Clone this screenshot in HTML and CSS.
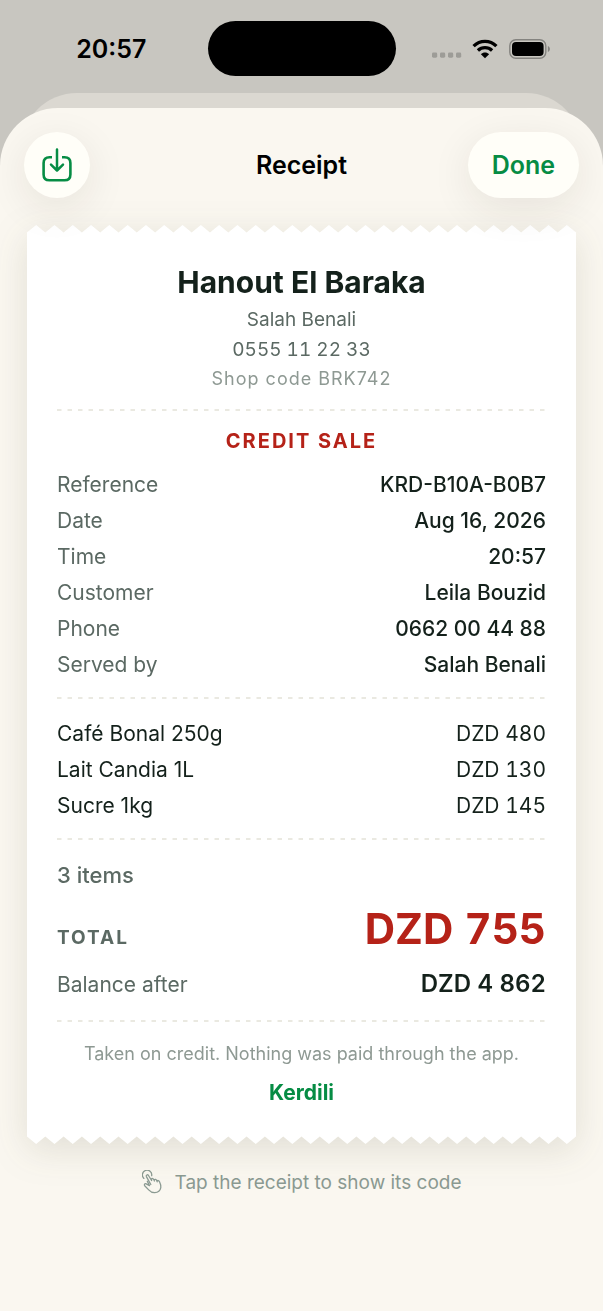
FILE: index.html
```
<!DOCTYPE html>
<html lang="en">
<head>
<meta charset="utf-8">
<meta name="viewport" content="width=device-width, initial-scale=1">
<title>Receipt</title>
<link rel="stylesheet" href="styles.css">
</head>
<body>
<div class="screen">
  <header class="status">
    <time class="clock">20:57</time>
    <div class="island"></div>
    <div class="indicators">
      <svg class="dots" viewBox="0 0 30 6" aria-hidden="true"><g fill="#9d9c97"><rect x="0" y="0.5" width="5.2" height="5.2" rx="1.4"/><rect x="8" y="0.5" width="5.2" height="5.2" rx="1.4"/><rect x="16" y="0.5" width="5.2" height="5.2" rx="1.4"/><rect x="24" y="0.5" width="5.2" height="5.2" rx="1.4"/></g></svg>
      <svg class="wifi" viewBox="0 0 26 20" aria-label="Wi-Fi" role="img"><g fill="none" stroke="#000" stroke-width="3.3"><path d="M1.6 7.2C8 .8 18 .8 24.4 7.2"/><path d="M5.9 11.5C10 7.7 16 7.7 20.1 11.5"/></g><path d="M13 19.3 8.9 15.2C11.2 13 14.8 13 17.1 15.2Z"/></svg>
      <svg class="battery" viewBox="0 0 42 20" aria-label="Battery" role="img"><rect x="0.8" y="0.8" width="36" height="18.4" rx="6" fill="none" stroke="#84837f" stroke-width="1.4"/><rect x="3" y="3" width="31.6" height="14" rx="4" fill="#000"/><path d="M38.9 7v6c1.2-.5 2-1.6 2-3s-.8-2.500-2-3Z" fill="#84837f"/></svg>
    </div>
  </header>
  <div class="stack">
    <div class="behind"></div>
    <main class="sheet">
      <div class="toolbar">
        <button class="round" type="button" aria-label="Save receipt">
          <svg class="save" viewBox="0 0 32 36" fill="none" stroke="#068c44" stroke-linecap="round" stroke-linejoin="round"><path stroke-width="2.600" d="M11 10.300H8.500C4.600 10.300 2.600 12.300 2.600 16v11.500C2.600 31.400 4.600 33.300 8.500 33.300h15c3.900 0 5.900-1.900 5.900-5.800V16c0-3.700-2-5.700-5.900-5.700H21" stroke-linecap="butt"/><path stroke-width="2.500" d="M16 2.500v20.700M10 17.700l6 5.800 6-5.800"/></svg>
        </button>
        <h1 class="title">Receipt</h1>
        <button class="done" type="button">Done</button>
      </div>
      <article class="receipt">
        <svg class="edge" viewBox="0 0 60 8" preserveAspectRatio="none" aria-hidden="true"><path fill="#fff" d="M0 8V7.500L1 0l1 7.500L3 0l1 7.500L5 0l1 7.500L7 0l1 7.500L9 0l1 7.500L11 0l1 7.500L13 0l1 7.500L15 0l1 7.500L17 0l1 7.500L19 0l1 7.500L21 0l1 7.500L23 0l1 7.500L25 0l1 7.500L27 0l1 7.500L29 0l1 7.500L31 0l1 7.500L33 0l1 7.500L35 0l1 7.500L37 0l1 7.500L39 0l1 7.500L41 0l1 7.500L43 0l1 7.500L45 0l1 7.500L47 0l1 7.500L49 0l1 7.500L51 0l1 7.500L53 0l1 7.500L55 0l1 7.500L57 0l1 7.500L59 0l1 7.500V8Z"/></svg>
        <div class="paper">
          <section class="shop">
            <h2 class="name">Hanout El Baraka</h2>
            <p class="owner">Salah Benali</p>
            <p class="tel">0555 11 22 33</p>
            <p class="code">Shop code BRK742</p>
          </section>
          <svg class="rule" aria-hidden="true"><line x1="0" y1="1" x2="100%" y2="1"/></svg>
          <section class="sale">
            <h3 class="kind">CREDIT SALE</h3>
            <dl class="rows">
              <div class="row"><dt>Reference</dt><dd>KRD-B10A-B0B7</dd></div>
              <div class="row"><dt>Date</dt><dd>Aug 16, 2026</dd></div>
              <div class="row"><dt>Time</dt><dd>20:57</dd></div>
              <div class="row"><dt>Customer</dt><dd>Leila Bouzid</dd></div>
              <div class="row"><dt>Phone</dt><dd>0662 00 44 88</dd></div>
              <div class="row"><dt>Served by</dt><dd>Salah Benali</dd></div>
            </dl>
          </section>
          <svg class="rule" aria-hidden="true"><line x1="0" y1="1" x2="100%" y2="1"/></svg>
          <table class="items">
            <tbody>
              <tr><th scope="row">Café Bonal 250g</th><td>DZD 480</td></tr>
              <tr><th scope="row">Lait Candia 1L</th><td>DZD 130</td></tr>
              <tr><th scope="row">Sucre 1kg</th><td>DZD 145</td></tr>
            </tbody>
          </table>
          <svg class="rule" aria-hidden="true"><line x1="0" y1="1" x2="100%" y2="1"/></svg>
          <section class="sums">
            <p class="count">3 items</p>
            <div class="total"><span class="total-label">TOTAL</span><strong class="amount">DZD 755</strong></div>
            <div class="balance"><span>Balance after</span><strong class="after">DZD 4 862</strong></div>
          </section>
          <svg class="rule" aria-hidden="true"><line x1="0" y1="1" x2="100%" y2="1"/></svg>
          <footer class="foot">
            <p class="note">Taken on credit. Nothing was paid through the app.</p>
            <p class="brand">Kerdili</p>
          </footer>
        </div>
        <svg class="edge" viewBox="0 0 60 8" preserveAspectRatio="none" aria-hidden="true"><path fill="#fff" d="M0 0V.5L1 8l1-7.500L3 8l1-7.500L5 8l1-7.500L7 8l1-7.500L9 8l1-7.500L11 8l1-7.500L13 8l1-7.500L15 8l1-7.500L17 8l1-7.500L19 8l1-7.500L21 8l1-7.500L23 8l1-7.500L25 8l1-7.500L27 8l1-7.500L29 8l1-7.500L31 8l1-7.500L33 8l1-7.500L35 8l1-7.500L37 8l1-7.500L39 8l1-7.500L41 8l1-7.500L43 8l1-7.500L45 8l1-7.500L47 8l1-7.500L49 8l1-7.500L51 8l1-7.500L53 8l1-7.500L55 8l1-7.500L57 8l1-7.500L59 8l1-7.500V0Z"/></svg>
      </article>
      <p class="hint">
        <svg class="tap" viewBox="0 0 20 24" fill="none" stroke="#8b9a92" stroke-width="1.300" stroke-linecap="round" stroke-linejoin="round" aria-hidden="true"><path d="M1.900 8.400A4.700 4.700 0 1 1 9.700 5.600"/><path d="M8.800 14.500 4.400 6.600c-.7-1.500 1.200-2.500 2.100-1.100l3.100 5M9.600 10.500l-.4-1.200c.9-1.300 2-.9 2.800.6l.4 1.100M12 9.900c.9-1 2.100-.7 2.700.6l.5 1.300M14.900 10.900c1-.8 2-.4 2.600.8 1.100 2.200 1.700 4 1.300 6-.6 3-3 4.900-6 5-2.600.1-4.600-1.100-6.100-2.800l-4-4.200c-.9-1.100.1-2.500 1.500-1.800l3.300 1.700-2.200-4.300"/></svg>
        <span>Tap the receipt to show its code</span>
      </p>
    </main>
  </div>
</div>
</body>
</html>
```
FILE: styles.css
```
* { box-sizing: border-box; }
body, h1, h2, h3, p, dl, dd { margin: 0; }
body {
  background: #c8c6c0;
  color: #14211b;
  font-family: Inter, "Liberation Sans", sans-serif;
  font-size: 21px;
  line-height: 24px;
}
.screen { display: flex; flex-direction: column; min-height: 100vh; }
.status {
  display: grid;
  grid-template-columns: 1fr 188px 1fr;
  align-items: center;
  padding: 21px 0 17px;
  color: #000;
}
.clock { padding: 1px 0 0 15px; text-align: center; font-size: 25px; font-weight: 600; }
.island { height: 55px; border-radius: 28px; background: #000; }
.indicators { display: flex; justify-content: center; align-items: center; padding-right: 16px; }
.indicators svg { display: block; }
.dots { width: 30px; height: 6px; margin: 13px 10px 0 0; }
.wifi { width: 26px; height: 20px; margin-right: 11px; }
.battery { width: 42px; height: 20px; }
.stack { display: flex; flex: 1; flex-direction: column; }
.behind { height: 75px; margin: 0 21px -60px; border-radius: 56px 56px 0 0; background: #dbd8d1; }
.sheet { flex: 1; padding: 24px 24px 30px; border-radius: 58px 58px 0 0; background: #faf7f0; position: relative; overflow: hidden; }
.toolbar {
  display: grid;
  grid-template-columns: 1fr auto 1fr;
  align-items: center;
  position: relative;
  z-index: 1;
}
.round, .done {
  height: 66px;
  border: 0;
  border-radius: 33px;
  background: #fffef8;
  box-shadow: 0 10px 42px rgba(40, 35, 20, 0.09);
  color: #068c44;
  font: 600 25px/30px Inter, "Liberation Sans", sans-serif;
}
.round { display: grid; place-items: center; width: 66px; padding: 0; }
.save { width: 32px; height: 36px; }
.title { color: #000; font-size: 25px; font-weight: 600; line-height: 30px; }
.done { justify-self: end; padding: 0 24px; }
.receipt { margin: 27px 3px 0; filter: drop-shadow(0 9px 18px rgba(60, 60, 30, 0.13)); }
.edge { display: block; width: 100%; height: 8px; }
.paper { padding: 31px 30px 29px; background: #fff; }
.shop { padding-bottom: 2px; text-align: center; color: #5b6963; }
.name { color: #14211b; font-size: 30px; font-weight: 700; line-height: 36px; }
.owner { margin-top: 5px; font-size: 19px; line-height: 30px; }
.tel { font-size: 19px; line-height: 30px; font-variant-numeric: tabular-nums; }
.code { color: #8e9993; font-size: 18px; line-height: 28px; letter-spacing: 1px; }
.rule { display: block; width: 100%; height: 2px; margin: 14px 0 17px; }
.rule line { stroke: #e3e2d8; stroke-width: 1.5; stroke-dasharray: 4.5 6; }
.kind { color: #b52218; font-size: 20px; font-weight: 700; line-height: 26px; letter-spacing: 2px; text-align: center; }
.rows { margin-top: 13px; }
.row { display: flex; justify-content: space-between; line-height: 36px; }
.row dt { color: #5b6963; }
.row dd { font-weight: 500; }
.items { width: 100%; border-collapse: collapse; line-height: 36px; }
.items th, .items td { padding: 0; font-weight: 400; text-align: left; }
.items td { text-align: right; font-variant-numeric: tabular-nums; }
.sums { padding-bottom: 3px; color: #5b6963; }
.count { font-size: 22px; font-weight: 500; line-height: 36px; }
.total { display: flex; justify-content: space-between; align-items: baseline; margin-top: 10px; }
.total-label { font-size: 19px; font-weight: 700; letter-spacing: 2px; }
.amount { color: #b52218; font-size: 42px; font-weight: 700; line-height: 52px; font-variant-numeric: tabular-nums; }
.balance { display: flex; justify-content: space-between; align-items: baseline; margin-top: 11px; line-height: 36px; }
.after { color: #14211b; font-size: 24px; font-weight: 600; font-variant-numeric: tabular-nums; }
.foot { text-align: center; }
.note { color: #8e9993; font-size: 18px; line-height: 30px; }
.brand { margin-top: 10px; color: #068c44; font-weight: 700; line-height: 28px; }
.hint { display: flex; justify-content: center; gap: 13px; margin-top: 26px; color: #8b9a92; font-size: 19px; line-height: 26px; }
.tap { width: 20px; height: 24px; }
```
